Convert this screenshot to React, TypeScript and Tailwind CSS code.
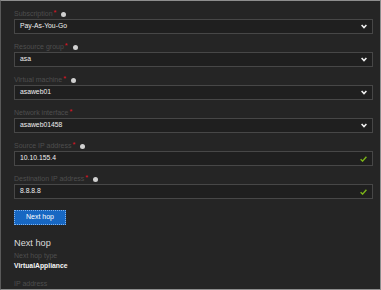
import React from "react";

const Chevron = () => (
  <svg width="6" height="5" viewBox="0 0 6 5" className="shrink-0">
    <path d="M0.6 1 L3 3.6 L5.4 1" fill="none" stroke="#f2f2f2" strokeWidth="1.5" />
  </svg>
);

const Check = () => (
  <svg width="7" height="6" viewBox="0 0 7 6" className="shrink-0">
    <path d="M0.6 3.2 L2.6 5.1 L6.4 0.8" fill="none" stroke="#7cb518" strokeWidth="1.4" />
  </svg>
);

type Field = { label: string; value: string; info: boolean; kind: "select" | "text" };

const fields: Field[] = [
  { label: "Subscription", value: "Pay-As-You-Go", info: true, kind: "select" },
  { label: "Resource group", value: "asa", info: true, kind: "select" },
  { label: "Virtual machine", value: "asaweb01", info: true, kind: "select" },
  { label: "Network interface", value: "asaweb01458", info: false, kind: "select" },
  { label: "Source IP address", value: "10.10.155.4", info: true, kind: "text" },
  { label: "Destination IP address", value: "8.8.8.8", info: true, kind: "text" },
];

export default function App() {
  return (
    <div
      className="w-[381px] h-[290px] overflow-hidden bg-[#252525] border border-[#8e8e8e] border-l-[#5a5a5a] box-border pl-[13px] pr-[7px] pt-[8px]"
      style={{ fontFamily: '"Liberation Sans", Arial, sans-serif' }}
    >
      <div className="flex flex-col gap-[8px]">
        {fields.map((f) => (
          <div key={f.label} className="flex flex-col">
            <div className="flex items-center h-[10px] text-[7px] text-[#4e4e4e]">
              <span>{f.label}</span>
              <span className="text-[#e81123] ml-[1px] -mt-[2px]">*</span>
              {f.info && <span className="ml-[5px] w-[5px] h-[5px] rounded-full bg-[#d0d0d0]" />}
            </div>
            <div className="h-[15px] border border-[#474747] bg-[#1f1f1f] flex items-center justify-between pl-[5px] pr-[5px]">
              <span className="text-[6.8px] text-[#f0f0f0]">{f.value}</span>
              {f.kind === "select" ? <Chevron /> : <Check />}
            </div>
          </div>
        ))}
      </div>
      <div className="mt-[11px]">
        <button className="w-[52px] h-[15px] bg-[#1767c2] border border-dotted border-[#7fb2ee] text-white text-[7px] flex items-center justify-center">
          Next hop
        </button>
      </div>
      <div className="mt-[11px] text-[9.2px] leading-[14px] text-[#dcdcdc]">Next hop</div>
      <div className="mt-[1px] text-[7px] leading-[10px] text-[#4e4e4e]">Next hop type</div>
      <div className="text-[6.8px] leading-[10px] font-bold text-[#f5f5f5]">VirtualAppliance</div>
      <div className="mt-[8px] text-[7px] leading-[10px] text-[#4e4e4e]">IP address</div>
    </div>
  );
}
